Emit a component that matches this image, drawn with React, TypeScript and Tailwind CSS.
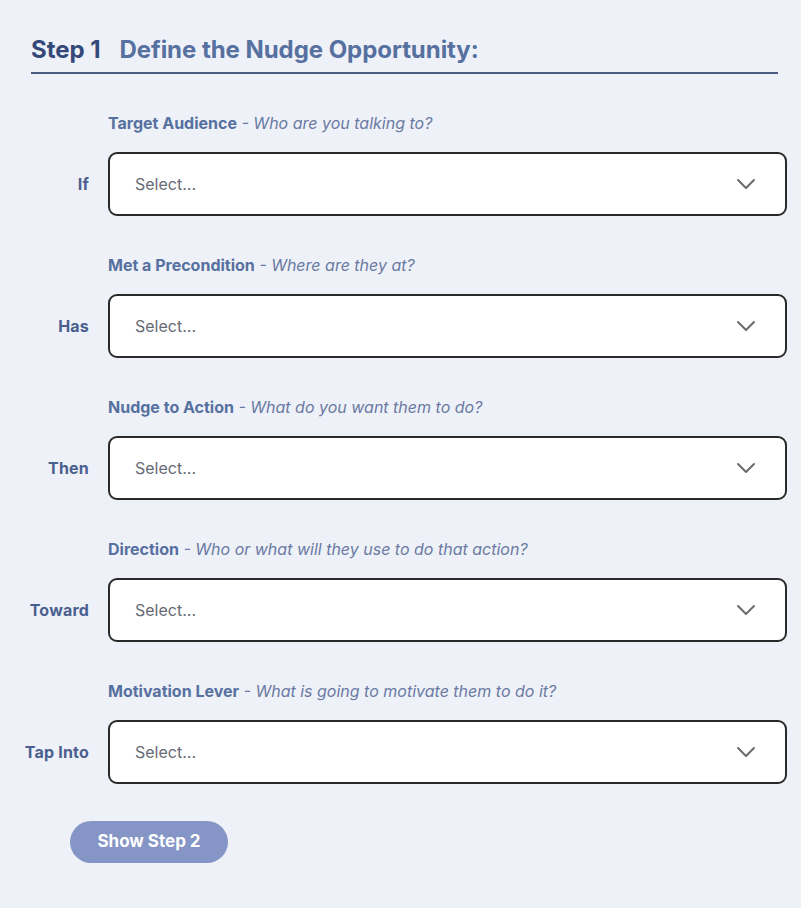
import React from "react";

const rows = [
  { label: "If", title: "Target Audience", hint: "Who are you talking to?" },
  { label: "Has", title: "Met a Precondition", hint: "Where are they at?" },
  { label: "Then", title: "Nudge to Action", hint: "What do you want them to do?" },
  { label: "Toward", title: "Direction", hint: "Who or what will they use to do that action?" },
  { label: "Tap Into", title: "Motivation Lever", hint: "What is going to motivate them to do it?" },
];

function Chevron() {
  return (
    <svg width="20" height="12" viewBox="0 0 20 12" fill="none">
      <path d="M2 2 L10 10 L18 2" stroke="#6b6b6b" strokeWidth="2" strokeLinecap="round" strokeLinejoin="round" />
    </svg>
  );
}

export default function App() {
  return (
    <div className="w-[801px] h-[908px] bg-[#eef1f7] font-['Inter',sans-serif] overflow-hidden">
      <div className="pl-[31px] pr-[23px] pt-[34px]">
        <h1 className="flex items-baseline gap-[19px] text-[24px] font-bold leading-[32px] tracking-[-0.05px]">
          <span className="text-[#34497a]">Step 1</span>
          <span className="text-[#5670a0]">Define the Nudge Opportunity:</span>
        </h1>
        <div className="mt-[6px] h-[2px] w-[747px] bg-[#4a5a80]" />
      </div>
      <div className="mt-[38px] flex flex-col gap-[38px]">
        {rows.map((r) => (
          <div key={r.label} className="flex flex-col">
            <div className="pl-[108px] text-[16px] leading-[22px] text-[#5670a0]">
              <span className="font-bold">{r.title}</span>
              <span className="italic text-[#6a7aa3]"> - {r.hint}</span>
            </div>
            <div className="mt-[18px] flex items-center">
              <div className="w-[89px] text-right text-[16px] font-bold tracking-[0.2px] text-[#4a5f8f]">{r.label}</div>
              <div className="ml-[19px] flex h-[64px] w-[679px] items-center justify-between rounded-[9px] border-2 border-[#2a2a2a] bg-white pl-[25px] pr-[29px]">
                <span className="text-[16px] text-[#666a73]">Select...</span>
                <Chevron />
              </div>
            </div>
          </div>
        ))}
      </div>
      <div className="mt-[37px] pl-[70px]">
        <button className="h-[42px] w-[158px] rounded-full bg-[#8596c6] text-[17px] font-bold text-white">
          Show Step 2
        </button>
      </div>
    </div>
  );
}
